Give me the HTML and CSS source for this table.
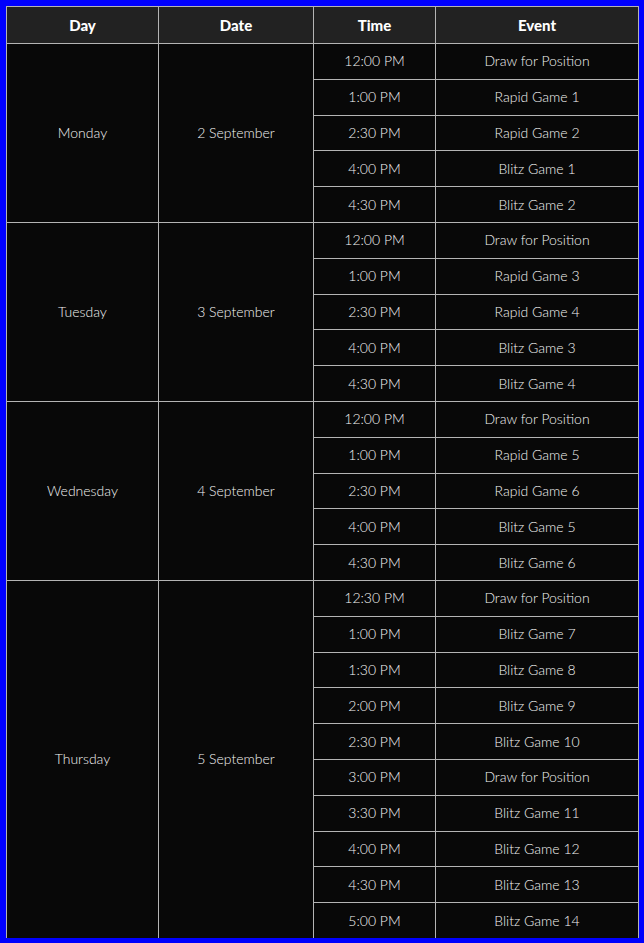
FILE: index.html
```html
<!DOCTYPE html>
<html>
<head>
<meta charset="utf-8">
<link rel="stylesheet" href="styles.css">
</head>
<body>
<table class="schedule">
  <colgroup>
    <col class="c-day"><col class="c-date"><col class="c-time"><col class="c-event">
  </colgroup>
  <thead>
    <tr><th>Day</th><th>Date</th><th>Time</th><th>Event</th></tr>
  </thead>
  <tbody>
    <tr><td rowspan="5">Monday</td><td rowspan="5">2 September</td><td>12:00 PM</td><td>Draw for Position</td></tr>
    <tr><td>1:00 PM</td><td>Rapid Game 1</td></tr>
    <tr><td>2:30 PM</td><td>Rapid Game 2</td></tr>
    <tr><td>4:00 PM</td><td>Blitz Game 1</td></tr>
    <tr><td>4:30 PM</td><td>Blitz Game 2</td></tr>
    <tr><td rowspan="5">Tuesday</td><td rowspan="5">3 September</td><td>12:00 PM</td><td>Draw for Position</td></tr>
    <tr><td>1:00 PM</td><td>Rapid Game 3</td></tr>
    <tr><td>2:30 PM</td><td>Rapid Game 4</td></tr>
    <tr><td>4:00 PM</td><td>Blitz Game 3</td></tr>
    <tr><td>4:30 PM</td><td>Blitz Game 4</td></tr>
    <tr><td rowspan="5">Wednesday</td><td rowspan="5">4 September</td><td>12:00 PM</td><td>Draw for Position</td></tr>
    <tr><td>1:00 PM</td><td>Rapid Game 5</td></tr>
    <tr><td>2:30 PM</td><td>Rapid Game 6</td></tr>
    <tr><td>4:00 PM</td><td>Blitz Game 5</td></tr>
    <tr><td>4:30 PM</td><td>Blitz Game 6</td></tr>
    <tr><td rowspan="10" class="last">Thursday</td><td rowspan="10" class="last">5 September</td><td>12:30 PM</td><td>Draw for Position</td></tr>
    <tr><td>1:00 PM</td><td>Blitz Game 7</td></tr>
    <tr><td>1:30 PM</td><td>Blitz Game 8</td></tr>
    <tr><td>2:00 PM</td><td>Blitz Game 9</td></tr>
    <tr><td>2:30 PM</td><td>Blitz Game 10</td></tr>
    <tr><td>3:00 PM</td><td>Draw for Position</td></tr>
    <tr><td>3:30 PM</td><td>Blitz Game 11</td></tr>
    <tr><td>4:00 PM</td><td>Blitz Game 12</td></tr>
    <tr><td>4:30 PM</td><td>Blitz Game 13</td></tr>
    <tr class="final"><td class="last">5:00 PM</td><td class="last">Blitz Game 14</td></tr>
  </tbody>
</table>
</body>
</html>
```
FILE: styles.css
```css
html, body {
  margin: 0;
  padding: 0;
  background: #0000fe;
}
body {
  padding: 6px 6px 0 6px;
  font-family: "Lato", "Liberation Sans", sans-serif;
}
.schedule {
  width: 633px;
  border-collapse: collapse;
  table-layout: fixed;
  background: #080808;
  color: #f4f4f4;
  font-size: 14px;
  font-weight: 300;
}
.c-day { width: 152px; }
.c-date { width: 155px; }
.c-time { width: 122px; }
.c-event { width: 203px; }
.schedule th,
.schedule td {
  border: 1px solid #b4b4b4;
  text-align: center;
  vertical-align: middle;
  padding: 0;
}
.schedule th {
  background: #222222;
  color: #ffffff;
  font-weight: 900;
  font-size: 15px;
  height: 36px;
}
.schedule td {
  height: 33.8px;
  padding-bottom: 1px;
}
.schedule td.last {
  border-bottom: none;
}
```
